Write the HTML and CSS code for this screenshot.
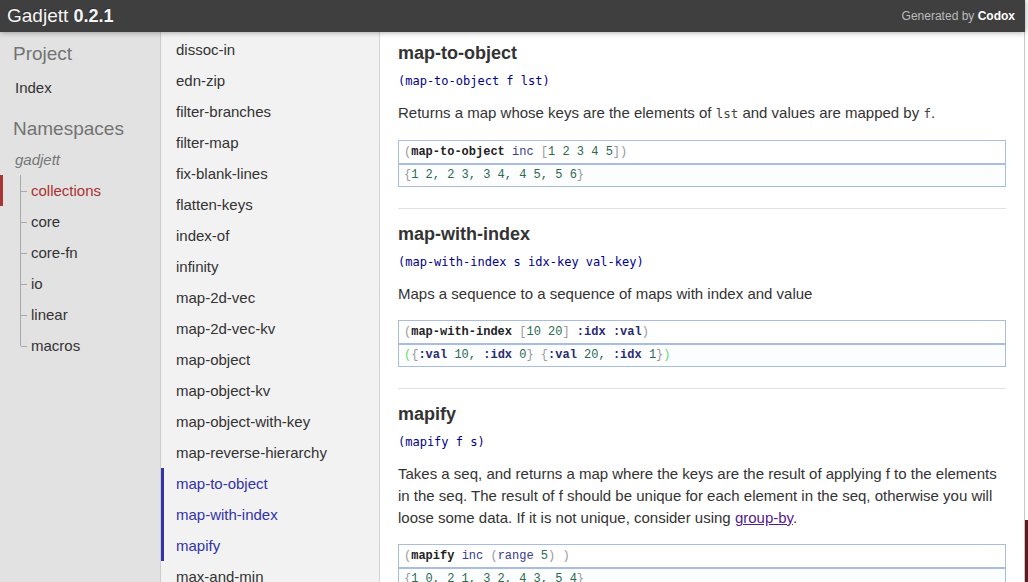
FILE: index.html
```html
<!DOCTYPE html>
<html>
<head>
<meta charset="utf-8">
<title>gadjett.collections documentation</title>
<link rel="stylesheet" href="styles.css">
</head>
<body>
<div class="page">
  <header class="header">
    <h1 class="title"><span class="project-name">Gadjett</span> <span class="project-version">0.2.1</span></h1>
    <h2 class="generated">Generated by <a href="#">Codox</a></h2>
  </header>
  <div class="main">
    <nav class="sidebar primary">
      <h3 class="side-title">Project</h3>
      <ul class="index-link">
        <li><a class="item" href="#">Index</a></li>
      </ul>
      <h3 class="side-title">Namespaces</h3>
      <ul class="ns-list">
        <li><span class="item no-link">gadjett</span></li>
        <li class="tree-item current"><span class="tree"></span><a class="item" href="#">collections</a></li>
        <li class="tree-item"><span class="tree"></span><a class="item" href="#">core</a></li>
        <li class="tree-item"><span class="tree"></span><a class="item" href="#">core-fn</a></li>
        <li class="tree-item"><span class="tree"></span><a class="item" href="#">io</a></li>
        <li class="tree-item"><span class="tree"></span><a class="item" href="#">linear</a></li>
        <li class="tree-item last"><span class="tree"></span><a class="item" href="#">macros</a></li>
      </ul>
    </nav>
    <nav class="sidebar secondary">
      <ul class="var-list">
        <li><a class="item" href="#">dissoc-in</a></li>
        <li><a class="item" href="#">edn-zip</a></li>
        <li><a class="item" href="#">filter-branches</a></li>
        <li><a class="item" href="#">filter-map</a></li>
        <li><a class="item" href="#">fix-blank-lines</a></li>
        <li><a class="item" href="#">flatten-keys</a></li>
        <li><a class="item" href="#">index-of</a></li>
        <li><a class="item" href="#">infinity</a></li>
        <li><a class="item" href="#">map-2d-vec</a></li>
        <li><a class="item" href="#">map-2d-vec-kv</a></li>
        <li><a class="item" href="#">map-object</a></li>
        <li><a class="item" href="#">map-object-kv</a></li>
        <li><a class="item" href="#">map-object-with-key</a></li>
        <li><a class="item" href="#">map-reverse-hierarchy</a></li>
        <li class="current"><a class="item" href="#">map-to-object</a></li>
        <li class="current"><a class="item" href="#">map-with-index</a></li>
        <li class="current"><a class="item" href="#">mapify</a></li>
        <li><a class="item" href="#">max-and-min</a></li>
      </ul>
    </nav>
    <main class="content">
      <section class="public first">
        <h3 class="var-name">map-to-object</h3>
        <div class="usage"><code>(map-to-object f lst)</code></div>
        <p class="doc">Returns a map whose keys are the elements of <code class="inline">lst</code> and values are mapped by <code class="inline">f</code>.</p>
        <div class="example">
          <div class="ex-row"><span class="p">(</span><span class="fn">map-to-object</span> <span class="sym">inc</span> <span class="p">[</span><span class="num">1 2 3 4 5</span><span class="p">])</span></div>
          <div class="ex-row result"><span class="p">{</span><span class="num">1 2, 2 3, 3 4, 4 5, 5 6</span><span class="p">}</span></div>
        </div>
      </section>
      <section class="public">
        <h3 class="var-name">map-with-index</h3>
        <div class="usage"><code>(map-with-index s idx-key val-key)</code></div>
        <p class="doc">Maps a sequence to a sequence of maps with index and value</p>
        <div class="example">
          <div class="ex-row"><span class="p">(</span><span class="fn">map-with-index</span> <span class="p">[</span><span class="num">10 20</span><span class="p">]</span> <span class="kw">:idx</span> <span class="kw">:val</span><span class="p">)</span></div>
          <div class="ex-row result"><span class="gp">(</span><span class="p">{</span><span class="kw">:val</span> <span class="num">10</span>, <span class="kw">:idx</span> <span class="num">0</span><span class="p">}</span> <span class="p">{</span><span class="kw">:val</span> <span class="num">20</span>, <span class="kw">:idx</span> <span class="num">1</span><span class="p">}</span><span class="gp">)</span></div>
        </div>
      </section>
      <section class="public">
        <h3 class="var-name">mapify</h3>
        <div class="usage"><code>(mapify f s)</code></div>
        <p class="doc">Takes a seq, and returns a map where the keys are the result of applying f to the elements in the seq. The result of f should be unique for each element in the seq, otherwise you will loose some data. If it is not unique, consider using <a class="doc-link" href="#">group-by</a>.</p>
        <div class="example">
          <div class="ex-row"><span class="p">(</span><span class="fn">mapify</span> <span class="sym">inc</span> <span class="p">(</span><span class="sym">range</span> <span class="num">5</span><span class="p">) )</span></div>
          <div class="ex-row result"><span class="p">{</span><span class="num">1 0, 2 1, 3 2, 4 3, 5 4</span><span class="p">}</span></div>
        </div>
      </section>
    </main>
    <div class="edge"><span class="edge-mark"></span></div>
  </div>
</div>
</body>
</html>
```
FILE: styles.css
```css
html, body {
  margin: 0;
  padding: 0;
  height: 100%;
  overflow: hidden;
  background: #fff;
}
body {
  font-family: "Liberation Sans", Arial, Helvetica, sans-serif;
  font-size: 15px;
  color: #333;
}
.page {
  display: flex;
  flex-direction: column;
  width: 1028px;
  height: 582px;
}
.header {
  flex: 0 0 32px;
  width: 1025px;
  background: #3f3f3f;
  color: #f5f5f5;
  display: flex;
  align-items: center;
  justify-content: space-between;
  box-sizing: border-box;
  padding: 0 10px 0 7px;
  position: relative;
  z-index: 2;
  box-shadow: 0 0 6px rgba(0,0,0,0.4);
}
.title {
  margin: 0;
  font-size: 19px;
  font-weight: normal;
  color: #f5f5f5;
  text-shadow: -1px -1px 0 #333;
}
.project-version {
  font-weight: bold;
  font-size: 18px;
}
.generated {
  margin: 0;
  font-size: 12px;
  font-weight: normal;
  color: #bbb;
}
.generated a {
  color: #fff;
  font-weight: bold;
  text-decoration: none;
}
.main {
  flex: 1;
  display: flex;
  min-height: 0;
}
.sidebar ul {
  list-style: none;
  margin: 0;
  padding: 0;
}
.sidebar li {
  display: block;
  position: relative;
}
.item {
  display: block;
  height: 31px;
  line-height: 31px;
  white-space: nowrap;
  text-decoration: none;
  color: #333;
  border-left: 3px solid transparent;
}
.primary {
  flex: 0 0 160px;
  background: #e2e2e2;
  border-right: 1px solid #ccc;
}
.side-title {
  margin: 0;
  padding: 11px 13px 0 13px;
  font-size: 19px;
  line-height: 22px;
  font-weight: normal;
  color: #737373;
}
.index-link {
  padding: 7px 0 4px 0 !important;
}
.index-link .item {
  padding-left: 12px;
}
.ns-list {
  padding: 4px 0 0 0 !important;
}
.no-link {
  padding-left: 12px;
  font-style: italic;
  color: #777;
}
.tree-item .item {
  padding-left: 28px;
}
.tree {
  position: absolute;
  left: 20px;
  top: 0;
  height: 31px;
  width: 7px;
  border-left: 1px solid #a9a9a9;
}
.tree::after {
  content: "";
  position: absolute;
  left: 0;
  top: 16px;
  width: 6px;
  border-top: 1px solid #a9a9a9;
}
.tree-item.last .tree {
  height: 16px;
}
.primary .current .item {
  border-left-color: #a33;
  color: #a33;
}
.secondary {
  flex: 0 0 218px;
  background: #f2f2f2;
  border-right: 1px solid #d7d7d7;
}
.var-list {
  padding-top: 2px !important;
}
.var-list .item {
  padding-left: 12px;
}
.secondary .current .item {
  border-left-color: #33a;
  color: #33a;
}
.content {
  flex: 1;
  padding: 10px 18px 0 18px;
  overflow: hidden;
}
.public {
  border-top: 1px solid #e0e0e0;
  padding-top: 14px;
  padding-bottom: 21px;
}
.public.first {
  border-top: none;
  padding-top: 0;
}
.var-name {
  margin: 0;
  font-size: 18px;
  line-height: 22px;
  font-weight: bold;
  color: #333;
}
.usage {
  margin-top: 9px;
}
.usage code {
  display: block;
  font-family: "DejaVu Sans Mono", "Liberation Mono", monospace;
  font-size: 12px;
  line-height: 16px;
  color: #008;
}
.doc {
  margin: 13px 0 0 0;
  font-size: 15px;
  line-height: 22px;
  color: #333;
}
.inline {
  font-family: "DejaVu Sans Mono", monospace;
  font-size: 12.5px;
  color: #444;
}
.doc-link {
  color: #551a8b;
  text-decoration: underline;
}
.example {
  margin-top: 15px;
  border: 1px solid #a9bde3;
  font-family: "Liberation Mono", "DejaVu Sans Mono", monospace;
  font-size: 12px;
}
.ex-row {
  height: 22px;
  line-height: 22px;
  padding-left: 5px;
  color: #2b5c46;
  white-space: pre;
}
.ex-row.result {
  height: 21px;
  line-height: 21px;
  border-top: 2px solid #a9bde3;
  background: #fcfdff;
}
.p { color: #999; }
.gp { color: #6d6; }
.fn { color: #222; font-weight: bold; }
.sym { color: #3a3a8f; }
.num { color: #2b6a4a; }
.kw { color: #2a2a70; font-weight: bold; }
.edge {
  flex: 0 0 3px;
  border-left: 1px solid #c8c8c8;
  background: #fff;
  position: relative;
  margin-top: -32px;
}
.edge-mark {
  position: absolute;
  left: 0;
  bottom: 0;
  width: 3px;
  height: 62px;
  background: #5a1a20;
}
```
